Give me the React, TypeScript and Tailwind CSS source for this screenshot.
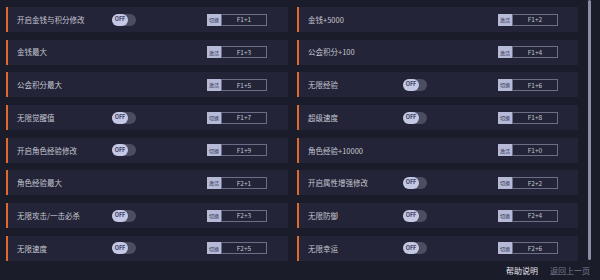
import React from "react";

type Item = { label: string; toggle: boolean; key: string };

const left: Item[] = [
  { label: "开启金钱与积分修改", toggle: true, key: "F1+1" },
  { label: "金钱最大", toggle: false, key: "F1+3" },
  { label: "公会积分最大", toggle: false, key: "F1+5" },
  { label: "无限觉醒值", toggle: true, key: "F1+7" },
  { label: "开启角色经验修改", toggle: true, key: "F1+9" },
  { label: "角色经验最大", toggle: false, key: "F2+1" },
  { label: "无限攻击/一击必杀", toggle: true, key: "F2+3" },
  { label: "无限速度", toggle: true, key: "F2+5" },
];

const right: Item[] = [
  { label: "金钱+5000", toggle: false, key: "F1+2" },
  { label: "公会积分+100", toggle: false, key: "F1+4" },
  { label: "无限经验", toggle: true, key: "F1+6" },
  { label: "超级速度", toggle: true, key: "F1+8" },
  { label: "角色经验+10000", toggle: false, key: "F1+0" },
  { label: "开启属性增强修改", toggle: true, key: "F2+2" },
  { label: "无限防御", toggle: true, key: "F2+4" },
  { label: "无限幸运", toggle: true, key: "F2+6" },
];

function Toggle() {
  return (
    <div className="w-[24px] h-[12px] rounded-full bg-[#4c4d60] flex items-center">
      <div className="w-[16px] h-[12px] rounded-full bg-[#c4c8e4] flex items-center justify-center text-[5.5px] leading-none text-[#3c3f62] font-bold">
        OFF
      </div>
    </div>
  );
}

function KeyBox({ toggle, k }: { toggle: boolean; k: string }) {
  return (
    <div className="flex h-[12px] w-[60px]">
      <div className="w-[14px] h-full bg-[#b6bad6] flex items-center justify-center text-[5px] leading-none text-[#2e3050]">
        {toggle ? "切换" : "激活"}
      </div>
      <div className="flex-1 h-full border border-[#6c6d86] flex items-center justify-center text-[6.5px] leading-none text-[#c4c5d2]">
        {k}
      </div>
    </div>
  );
}

function Row({ item }: { item: Item }) {
  return (
    <div className="flex items-center h-[25px] bg-[#232437]">
      <div className="w-[2px] h-full bg-[#e06a2c]" />
      <div className="w-[104px] pl-[9px] text-[7.5px] leading-none text-[#c6c7d2] whitespace-nowrap">
        {item.label}
      </div>
      <div className="w-[24px]">{item.toggle ? <Toggle /> : null}</div>
      <div className="w-[71px]" />
      <KeyBox toggle={item.toggle} k={item.key} />
    </div>
  );
}

export default function App() {
  return (
    <div
      className="w-[600px] h-[280px] bg-[#1b1c2a] flex flex-col overflow-hidden"
      style={{ fontFamily: '"Noto Sans CJK SC", "Noto Sans", sans-serif' }}
    >
      <div className="flex pl-[6px]">
        <div className="flex gap-[9px] pt-[7px]">
          <div className="w-[282px] flex flex-col gap-[7.7px]">
            {left.map((it) => (
              <Row key={it.label} item={it} />
            ))}
          </div>
          <div className="w-[281px] flex flex-col gap-[7.7px]">
            {right.map((it) => (
              <Row key={it.label} item={it} />
            ))}
          </div>
        </div>
        <div className="ml-[10px] w-[3px] h-[260px] bg-[#8c8da4] rounded-sm" />
      </div>
      <div className="flex justify-end items-center gap-[12px] pr-[10px] mt-[6px] text-[8px] leading-none">
        <span className="text-[#e8e8f0]">帮助说明</span>
        <span className="text-[#7e7f92]">返回上一页</span>
      </div>
    </div>
  );
}
